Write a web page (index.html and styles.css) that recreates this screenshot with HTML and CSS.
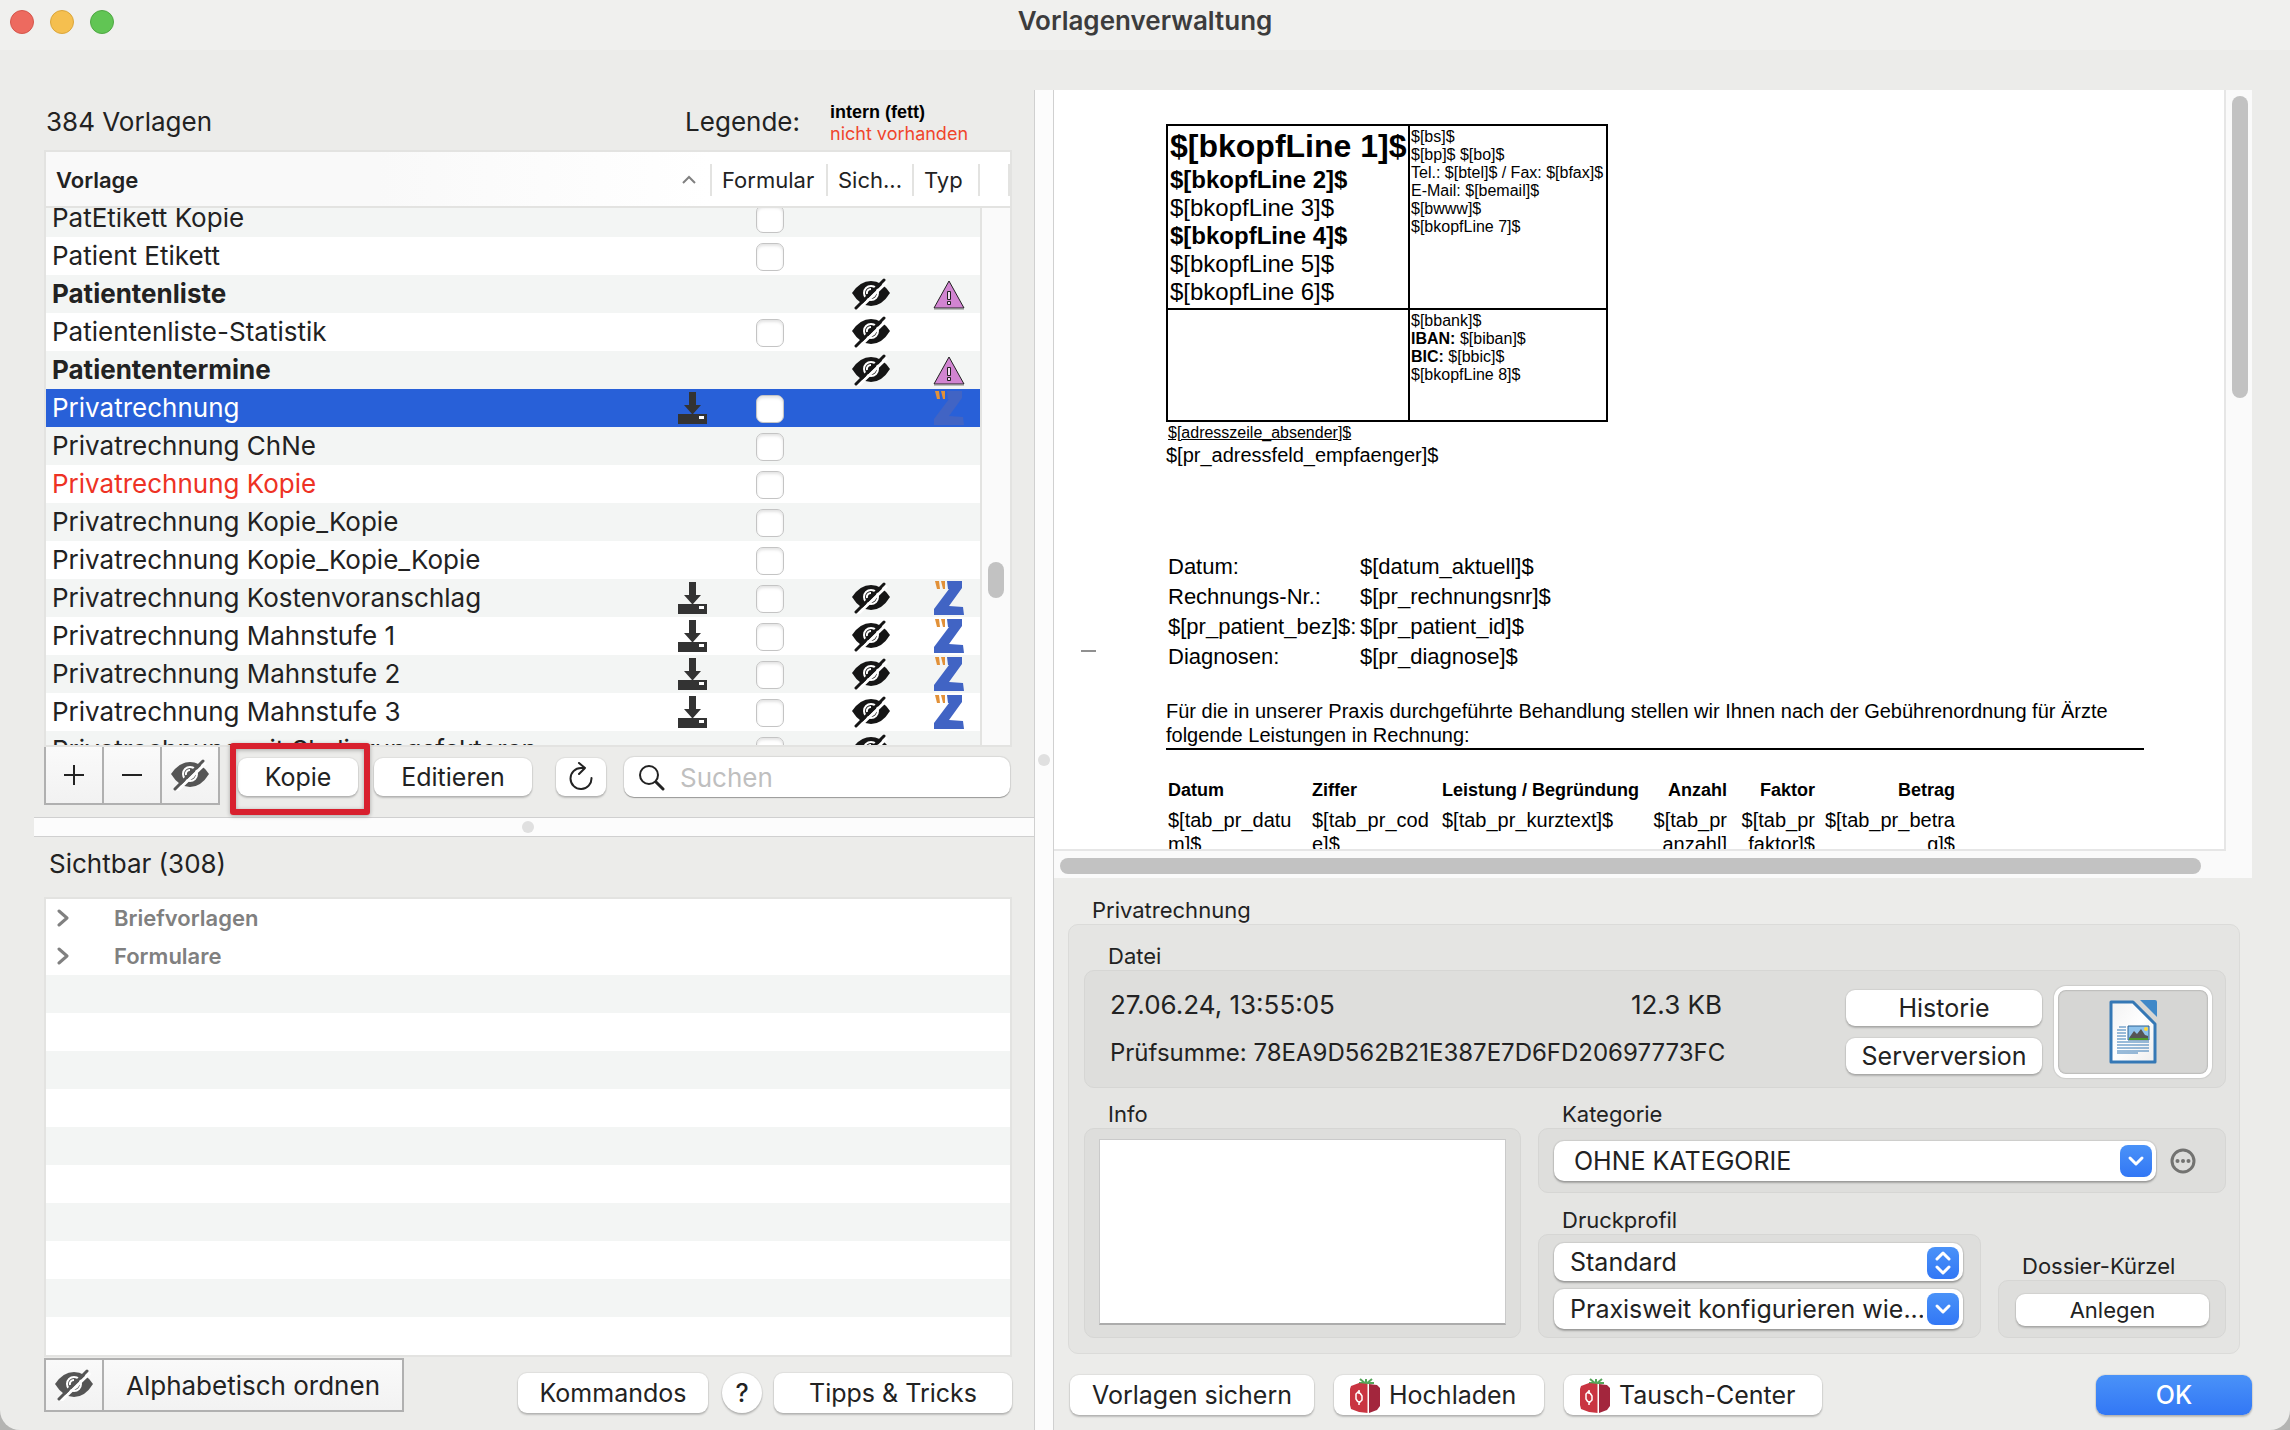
FILE: index.html
```html
<!DOCTYPE html>
<html lang="de">
<head>
    <meta charset="UTF-8">
    <meta name="viewport" content="width=device-width, initial-scale=1.0">
    <title>Vorlagenverwaltung</title>
    <link rel="stylesheet" href="styles.css">
</head>
<body>

<svg class="sprite" aria-hidden="true">
    <symbol id="icon-hidden" viewBox="0 0 38 32">
        <path d="M0 15Q8 3 19 3T38 15Q30 28 19 28T0 15Z" fill="currentColor"/>
        <circle cx="19" cy="15" r="7" fill="none" stroke="#fff" stroke-width="2"/>
        <path d="M15 16a4 4 0 0 1 4-5M23 15a4 4 0 0 1-3 4" fill="none" stroke="#fff" stroke-width="2"/>
        <path d="M6 32L35 4" stroke="#fff" stroke-width="3"/>
        <path d="M4 30L32 2" stroke="currentColor" stroke-width="3" stroke-linecap="round"/>
    </symbol>
    <symbol id="icon-download" viewBox="0 0 29 32">
        <path d="M11 0h7v13h5l-8 9h-1l-8-9h5zM0 22h29v10H0z" fill="#333"/>
        <path d="M21 24h5v3h-5z" fill="#fff"/>
    </symbol>
    <symbol id="icon-warning" viewBox="0 0 32 30">
        <path d="M16 1L31 28H1Z" fill="#d184d1" stroke="#222" stroke-linejoin="round"/>
        <path d="M14.500 11.500h3v8h-3zM14.500 21.500h3v3h-3z" fill="#f3dcf3" stroke="#222"/>
        <path d="M1 29h30" stroke="#888"/>
    </symbol>
    <symbol id="icon-z" viewBox="0 0 30 34">
        <path d="M13 0h15v7L15 25l14 1 1 8H0v-6L15 8h-1z" fill="#4164c4"/>
        <path d="M1 0h4l1 8H3zM7 0h4v8H9z" fill="#e29138"/>
    </symbol>
    <symbol id="icon-tomato" viewBox="0 0 30 36">
        <path d="M16 7V2M16 7l-6-5M16 7l6-5M16 6l-7 0M16 6l8 0" stroke="#55a55a" stroke-width="2"/>
        <path d="M1 9l8-3 9 1v29l-9-1-8-3-1-4V12z" fill="#c93441"/>
        <path d="M19 7l8 1 3 3v18l-3 4-8 3z" fill="#a3263d"/>
        <path d="M18 7v29" stroke="#fff"/>
        <path d="M8 25l-2-3v-5l2-2h2M9 13v4M10 16l2 3v4l-3 3M9 24v4" fill="none" stroke="#fff" stroke-width="1.500"/>
    </symbol>
    <symbol id="icon-down" viewBox="0 0 32 32">
        <path d="M10 13l6 6 6-6" fill="none" stroke="#fff" stroke-width="3" stroke-linecap="round" stroke-linejoin="round"/>
    </symbol>
    <symbol id="icon-updown" viewBox="0 0 32 32">
        <path d="M10 12l6-6 6 6M10 20l6 6 6-6" fill="none" stroke="#fff" stroke-width="3" stroke-linecap="round" stroke-linejoin="round"/>
    </symbol>
    <symbol id="icon-right" viewBox="0 0 12 18">
        <path d="M2 2l8 7-8 7" fill="none" stroke="#808080" stroke-width="3" stroke-linecap="round" stroke-linejoin="round"/>
    </symbol>
</svg>

<div class="window">
    <header class="titlebar">
        <div class="lights">
            <span class="light red"></span>
            <span class="light yellow"></span>
            <span class="light green"></span>
        </div>
        <h1>Vorlagenverwaltung</h1>
    </header>

    <main class="content">
        <div class="left">
            <section class="templates">
                <div class="list-head">
                    <span>384 Vorlagen</span>
                    <span class="legend-title">Legende:</span>
                    <span class="legend"><b>intern (fett)</b><i>nicht vorhanden</i></span>
                </div>
                <div class="list-box">
                    <div class="list-scroll" id="listScroll">
                        <table class="list">
                            <colgroup>
                                <col>
                                <col class="col-form">
                                <col class="col-vis">
                                <col class="col-type">
                                <col class="col-end">
                            </colgroup>
                            <thead>
                                <tr>
                                    <th class="sorted"><div>Vorlage
                                        <svg width="16" height="10" viewBox="0 0 16 10"><path d="M2 8l6-6 6 6" fill="none" stroke="#808080" stroke-width="2"/></svg></div></th>
                                    <th><div>Formular</div></th>
                                    <th><div>Sich...</div></th>
                                    <th><div>Typ</div></th>
                                    <th><div class="last"></div></th>
                                </tr>
                            </thead>
                            <tbody>
                                <tr><td>PatEtikett Kopie</td><td><input type="checkbox" aria-label="Formular"></td><td></td><td></td><td></td></tr>
                                <tr><td>Patient Etikett</td><td><input type="checkbox" aria-label="Formular"></td><td></td><td></td><td></td></tr>
                                <tr class="intern"><td>Patientenliste</td><td></td><td><svg class="eye"><use href="#icon-hidden"/></svg></td><td><svg class="warn"><use href="#icon-warning"/></svg></td><td></td></tr>
                                <tr><td>Patientenliste-Statistik</td><td><input type="checkbox" aria-label="Formular"></td><td><svg class="eye"><use href="#icon-hidden"/></svg></td><td></td><td></td></tr>
                                <tr class="intern"><td>Patiententermine</td><td></td><td><svg class="eye"><use href="#icon-hidden"/></svg></td><td><svg class="warn"><use href="#icon-warning"/></svg></td><td></td></tr>
                                <tr class="selected"><td>Privatrechnung<svg class="dl"><use href="#icon-download"/></svg></td><td><input type="checkbox" aria-label="Formular"></td><td></td><td><svg class="z"><use href="#icon-z"/></svg></td><td></td></tr>
                                <tr><td>Privatrechnung ChNe</td><td><input type="checkbox" aria-label="Formular"></td><td></td><td></td><td></td></tr>
                                <tr class="missing"><td>Privatrechnung Kopie</td><td><input type="checkbox" aria-label="Formular"></td><td></td><td></td><td></td></tr>
                                <tr><td>Privatrechnung Kopie_Kopie</td><td><input type="checkbox" aria-label="Formular"></td><td></td><td></td><td></td></tr>
                                <tr><td>Privatrechnung Kopie_Kopie_Kopie</td><td><input type="checkbox" aria-label="Formular"></td><td></td><td></td><td></td></tr>
                                <tr><td>Privatrechnung Kostenvoranschlag<svg class="dl"><use href="#icon-download"/></svg></td><td><input type="checkbox" aria-label="Formular"></td><td><svg class="eye"><use href="#icon-hidden"/></svg></td><td><svg class="z"><use href="#icon-z"/></svg></td><td></td></tr>
                                <tr><td>Privatrechnung Mahnstufe 1<svg class="dl"><use href="#icon-download"/></svg></td><td><input type="checkbox" aria-label="Formular"></td><td><svg class="eye"><use href="#icon-hidden"/></svg></td><td><svg class="z"><use href="#icon-z"/></svg></td><td></td></tr>
                                <tr><td>Privatrechnung Mahnstufe 2<svg class="dl"><use href="#icon-download"/></svg></td><td><input type="checkbox" aria-label="Formular"></td><td><svg class="eye"><use href="#icon-hidden"/></svg></td><td><svg class="z"><use href="#icon-z"/></svg></td><td></td></tr>
                                <tr><td>Privatrechnung Mahnstufe 3<svg class="dl"><use href="#icon-download"/></svg></td><td><input type="checkbox" aria-label="Formular"></td><td><svg class="eye"><use href="#icon-hidden"/></svg></td><td><svg class="z"><use href="#icon-z"/></svg></td><td></td></tr>
                                <tr><td>Privatrechnung mit Skalierungsfaktoren</td><td><input type="checkbox" aria-label="Formular"></td><td><svg class="eye"><use href="#icon-hidden"/></svg></td><td></td><td></td></tr>
                            </tbody>
                        </table>
                    </div>
                    <div class="list-track"><span></span></div>
                </div>
                <div class="toolbar">
                    <div class="segments">
                        <button type="button" aria-label="Hinzufügen"><svg width="22" height="22" viewBox="0 0 22 22"><path d="M1 11h20M11 1v20" stroke="#222" stroke-width="2"/></svg></button>
                        <button type="button" aria-label="Entfernen"><svg width="22" height="22" viewBox="0 0 22 22"><path d="M1 11h20" stroke="#222" stroke-width="2"/></svg></button>
                        <button type="button" aria-label="Ausblenden"><svg class="eye-big"><use href="#icon-hidden"/></svg></button>
                    </div>
                    <div class="marked"><button type="button" class="btn">Kopie</button></div>
                    <button type="button" class="btn edit">Editieren</button>
                    <button type="button" class="btn reload" aria-label="Neu laden"><svg width="26" height="30" viewBox="0 0 26 30"><path d="M13 6A10.500 10.500 0 1 0 23.500 16M11 1l6 5-6 6M17 6h-4" fill="none" stroke="#222" stroke-width="2" stroke-linecap="round" stroke-linejoin="round"/></svg></button>
                    <div class="search">
                        <svg width="27" height="27" viewBox="0 0 27 27"><circle cx="11" cy="11" r="9" fill="none" stroke="#222" stroke-width="2"/><path d="M18 18l7 7" stroke="#222" stroke-width="3" stroke-linecap="round"/></svg>
                        <input type="text" placeholder="Suchen" aria-label="Suchen">
                    </div>
                </div>
            </section>

            <div class="split-h"><span></span></div>

            <section class="visible">
                <div class="visible-head">Sichtbar (308)</div>
                <div class="tree">
                    <ul>
                        <li><svg><use href="#icon-right"/></svg>Briefvorlagen</li>
                        <li><svg><use href="#icon-right"/></svg>Formulare</li>
                    </ul>
                    <div class="stripes"></div>
                </div>
                <div class="left-footer">
                    <div class="segments order">
                        <button type="button" aria-label="Ausblenden"><svg class="eye"><use href="#icon-hidden"/></svg></button>
                        <button type="button">Alphabetisch ordnen</button>
                    </div>
                    <button type="button" class="btn commands">Kommandos</button>
                    <button type="button" class="btn help">?</button>
                    <button type="button" class="btn tips">Tipps &amp; Tricks</button>
                </div>
            </section>
        </div>

        <div class="split-v"><span></span></div>

        <div class="right">
            <div class="preview">
                <div class="page">
                    <table class="letterhead">
                        <tr>
                            <td>
                                <p class="line1">$[bkopfLine 1]$</p>
                                <p><b>$[bkopfLine 2]$</b></p>
                                <p>$[bkopfLine 3]$</p>
                                <p><b>$[bkopfLine 4]$</b></p>
                                <p>$[bkopfLine 5]$</p>
                                <p>$[bkopfLine 6]$</p>
                            </td>
                            <td class="small">
                                <p>$[bs]$</p>
                                <p>$[bp]$ $[bo]$</p>
                                <p>Tel.: $[btel]$ / Fax: $[bfax]$</p>
                                <p>E-Mail: $[bemail]$</p>
                                <p>$[bwww]$</p>
                                <p>$[bkopfLine 7]$</p>
                            </td>
                        </tr>
                        <tr>
                            <td></td>
                            <td class="small">
                                <p>$[bbank]$</p>
                                <p><b>IBAN:</b> $[biban]$</p>
                                <p><b>BIC:</b> $[bbic]$</p>
                                <p>$[bkopfLine 8]$</p>
                            </td>
                        </tr>
                    </table>
                    <p class="sender">$[adresszeile_absender]$</p>
                    <p class="recipient">$[pr_adressfeld_empfaenger]$</p>
                    <dl class="facts">
                        <dt>Datum:</dt><dd>$[datum_aktuell]$</dd>
                        <dt>Rechnungs-Nr.:</dt><dd>$[pr_rechnungsnr]$</dd>
                        <dt>$[pr_patient_bez]$:</dt><dd>$[pr_patient_id]$</dd>
                        <dt>Diagnosen:</dt><dd>$[pr_diagnose]$</dd>
                    </dl>
                    <p class="intro">Für die in unserer Praxis durchgeführte Behandlung stellen wir Ihnen nach der Gebührenordnung für Ärzte<br>folgende Leistungen in Rechnung:</p>
                    <table class="items">
                        <tr>
                            <th class="c-date">Datum</th>
                            <th class="c-code">Ziffer</th>
                            <th class="c-text">Leistung / Begründung</th>
                            <th class="c-count num">Anzahl</th>
                            <th class="c-factor num">Faktor</th>
                            <th class="c-sum num">Betrag</th>
                        </tr>
                        <tr>
                            <td>$[tab_pr_datu<br>m]$</td>
                            <td>$[tab_pr_cod<br>e]$</td>
                            <td>$[tab_pr_kurztext]$</td>
                            <td class="num">$[tab_pr<br>anzahl]</td>
                            <td class="num">$[tab_pr<br>faktor]$</td>
                            <td class="num">$[tab_pr_betra<br>g]$</td>
                        </tr>
                    </table>
                    <span class="fold"></span>
                </div>
                <div class="track-v"><span></span></div>
                <div class="track-h"><span></span></div>
            </div>

            <section class="details">
                <h2>Privatrechnung</h2>
                <div class="group outer">
                    <h3>Datei</h3>
                    <div class="group file">
                        <div class="file-info">
                            <p class="stamp"><span>27.06.24, 13:55:05</span><span>12.3 KB</span></p>
                            <p class="checksum">Prüfsumme: 78EA9D562B21E387E7D6FD20697773FC</p>
                        </div>
                        <div class="file-buttons">
                            <button type="button" class="btn">Historie</button>
                            <button type="button" class="btn">Serverversion</button>
                        </div>
                        <button type="button" class="doc-button" aria-label="Dokument öffnen">
                            <svg width="48" height="64" viewBox="0 0 48 64">
                                <defs>
                                    <linearGradient id="paper" x1="0" y1="0" x2="1" y2="1"><stop offset="0" stop-color="#f2f2f2"/><stop offset=".5" stop-color="#fff"/><stop offset="1" stop-color="#eee"/></linearGradient>
                                </defs>
                                <path d="M2 2H24L46 24V62H2Z" fill="url(#paper)" stroke="#3578b5" stroke-width="3" stroke-linejoin="round"/>
                                <path d="M31 0H46q2 0 2 2V17Z" fill="#3f88c8"/>
                                <path d="M10 27h7M8 30h9M8 33h9M8 36h9M8 39h9M8 42h32M8 45h32M8 48h32M8 51h32M8 53h21" stroke="#3578b5"/>
                                <path d="M19 26h21v14H19z" fill="#8fc3ec" stroke="#2d6293"/>
                                <path d="M20 38l5-7 3 3 4-5 4 6 3 1v3H20z" fill="#555"/>
                                <path d="M20 38h19v2H20z" fill="#4c9a2a"/>
                                <circle cx="37" cy="29" r="2" fill="#ffd83d"/>
                            </svg>
                        </button>
                    </div>
                    <div class="lower">
                        <div class="info">
                            <h3><label for="info">Info</label></h3>
                            <div class="group"><textarea id="info"></textarea></div>
                        </div>
                        <div class="settings">
                            <h3><label for="category">Kategorie</label></h3>
                            <div class="group category">
                                <div class="popup">
                                    <select id="category"><option>OHNE KATEGORIE</option></select>
                                    <svg><use href="#icon-down"/></svg>
                                </div>
                                <button type="button" class="more" aria-label="Mehr"><svg width="26" height="26" viewBox="0 0 26 26"><circle cx="13" cy="13" r="11" fill="none" stroke="#737371" stroke-width="3"/><g fill="#737371"><circle cx="7.500" cy="13" r="2"/><circle cx="13" cy="13" r="2"/><circle cx="18.500" cy="13" r="2"/></g></svg></button>
                            </div>
                            <div class="profile-row">
                                <div>
                                    <h3><label for="profile">Druckprofil</label></h3>
                                    <div class="group profile">
                                        <div class="popup low">
                                            <select id="profile"><option>Standard</option></select>
                                            <svg><use href="#icon-updown"/></svg>
                                        </div>
                                        <div class="popup">
                                            <select aria-label="Konfiguration"><option>Praxisweit konfigurieren wie...</option></select>
                                            <svg><use href="#icon-down"/></svg>
                                        </div>
                                    </div>
                                </div>
                                <div class="dossier">
                                    <h3>Dossier-Kürzel</h3>
                                    <div class="group"><button type="button" class="btn create">Anlegen</button></div>
                                </div>
                            </div>
                        </div>
                    </div>
                </div>
            </section>

            <div class="actions">
                <button type="button" class="btn save">Vorlagen sichern</button>
                <button type="button" class="btn upload"><svg><use href="#icon-tomato"/></svg>Hochladen</button>
                <button type="button" class="btn exchange"><svg><use href="#icon-tomato"/></svg>Tausch-Center</button>
                <button type="button" class="btn ok">OK</button>
            </div>
        </div>
    </main>
</div>

<script>
    document.getElementById('listScroll').scrollTop = 9;
</script>

</body>
</html>
```

FILE: styles.css
```css
* {
    box-sizing: border-box;
}

html {
    background: #b4b4b2;
}

body {
    margin: 0;
    font-family: Inter, Roboto, sans-serif;
    font-size: 26px;
    color: #222;
}

h1, h2, h3, p, ul, dl, dd {
    margin: 0;
    padding: 0;
    font-weight: normal;
}

button, input, select, textarea {
    font: inherit;
    color: inherit;
}

.sprite {
    position: absolute;
    width: 0;
    height: 0;
}

.window {
    display: flex;
    flex-direction: column;
    height: 100vh;
    background: #ececea;
    border-radius: 0 0 20px 20px;
    overflow: hidden;
}

/* title bar */
.titlebar {
    display: grid;
    grid-template-columns: 1fr auto 1fr;
    height: 50px;
    background: #f0f0ee;
}

.lights {
    display: flex;
    gap: 16px;
    padding: 10px;
}

.light {
    width: 24px;
    height: 24px;
    border-radius: 50%;
    border: 1px solid;
}

.red { background: #ed6a5f; border-color: #d5564b; }
.yellow { background: #f5bf4f; border-color: #dba63b; }
.green { background: #61c554; border-color: #4fa843; }

h1 {
    font-size: 26px;
    line-height: 42px;
    font-weight: 600;
    color: #3c3c3c;
}

.content {
    flex: 1;
    min-height: 0;
    display: grid;
    grid-template-columns: minmax(0, 1034fr) 20px minmax(0, 1236fr);
}

.left, .right, .templates, .visible {
    display: flex;
    flex-direction: column;
    min-height: 0;
}

.templates, .visible {
    padding: 0 22px 0 44px;
}

.templates { flex: 767 1 0; }
.visible { flex: 593 1 0; }

.list-head {
    display: flex;
    align-items: center;
    height: 100px;
    padding: 42px 0 0 2px;
}

.legend-title {
    margin-left: auto;
    margin-right: 30px;
}

.legend {
    display: flex;
    flex-direction: column;
    width: 182px;
    padding-top: 3px;
    font-size: 18px;
    line-height: 22px;
}

.legend b {
    font-family: "Liberation Sans", Arial, sans-serif;
    color: #000;
}

.legend i {
    font-style: normal;
    color: #f0452c;
}

/* template list */
.list-box {
    position: relative;
    flex: 1;
    min-height: 0;
    background: #fff;
    border: 2px solid #e3e3e1;
}

.list-scroll {
    height: 100%;
    overflow-y: scroll;
    scrollbar-width: none;
}

.list {
    width: 100%;
    table-layout: fixed;
    border-spacing: 0;
}

.col-form { width: 116px; }
.col-vis { width: 86px; }
.col-type { width: 66px; }
.col-end { width: 32px; }

.list th {
    position: sticky;
    top: 0;
    z-index: 1;
    height: 56px;
    padding: 2px 0 0;
    background: #fff;
    border-bottom: 2px solid #e3e3e1;
    font-size: 22px;
    font-weight: normal;
    text-align: left;
}

.list th.sorted {
    background: linear-gradient(90deg, #f9f9f9 50%, #fff);
    font-weight: 600;
}

.list th div {
    display: flex;
    align-items: center;
    height: 32px;
    padding-left: 10px;
    border-left: 2px solid #e3e3e1;
}

.list th.sorted div {
    justify-content: space-between;
    padding-right: 13px;
    border: 0;
}

.list th .last {
    border-right: 2px solid #e3e3e1;
}

.list td {
    height: 38px;
    padding: 0 0 2px 4px;
    line-height: 34px;
    text-align: center;
    white-space: nowrap;
}

.list td:first-child {
    padding: 0 3px 0 6px;
    line-height: 36px;
    text-align: left;
}

.list td:nth-child(4) {
    padding-left: 7px;
}

.list td svg, .list td input {
    vertical-align: middle;
}

.list tbody tr:nth-child(odd) { background: #f3f5f4; }
.list .intern { font-weight: 700; }
.list .missing { color: #ee3224; }

.list tbody .selected {
    background: #2860d8;
    color: #fff;
}

.list input {
    appearance: none;
    width: 28px;
    height: 28px;
    margin: 0;
    background: #fff;
    border: 1px solid #c4c4c4;
    border-radius: 7px;
    box-shadow: inset 0 2px 3px #e4e4e4;
}

.eye {
    width: 38px;
    height: 32px;
    color: #151515;
}

.warn {
    width: 32px;
    height: 30px;
}

.z {
    width: 30px;
    height: 34px;
}

.dl {
    float: right;
    width: 29px;
    height: 32px;
    margin-top: 2px;
}

.list-track {
    position: absolute;
    z-index: 2;
    top: 56px;
    right: 0;
    bottom: 0;
    width: 30px;
    padding-left: 6px;
    background: #fafafa;
    border-left: 2px solid #e3e3e1;
}

.list-track span {
    display: block;
    width: 16px;
    height: 36px;
    margin-top: 354px;
    border-radius: 8px;
    background: #c2c2c2;
}

/* buttons */
.btn {
    display: flex;
    flex: none;
    align-items: center;
    justify-content: center;
    height: 38px;
    padding: 0;
    background: #fff;
    border: 0;
    border-radius: 9px;
    box-shadow: 0 0 1px 1px rgba(0, 0, 0, 0.06), 0 2px 2px rgba(0, 0, 0, 0.2);
    font-size: 25px;
    white-space: nowrap;
}

.toolbar {
    display: flex;
    align-items: flex-start;
    height: 70px;
}

.toolbar > .btn, .marked {
    margin-top: 11px;
}

.segments {
    display: flex;
    flex: none;
    height: 58px;
    background: #b0b0b0;
    border: 2px solid #b0b0b0;
    border-top: 0;
    gap: 2px;
}

.segments button {
    display: flex;
    align-items: center;
    justify-content: center;
    width: 56px;
    padding: 0;
    border: 0;
    background: linear-gradient(#fafafa, #f2f2f2);
}

.segments .eye, .eye-big {
    color: #555;
}

.eye-big {
    width: 42px;
    height: 32px;
}

.marked {
    position: relative;
    flex: none;
    width: 120px;
    margin-left: 18px;
    margin-right: 16px;
}

.marked .btn {
    width: 100%;
}

/* red highlight frame around the copy button */
.marked::after {
    content: "";
    position: absolute;
    z-index: 3;
    inset: -15px -12px -19px -8px;
    border: 6px solid #d8202e;
    border-radius: 3px;
    box-shadow: 0 1px 4px rgba(0, 0, 0, 0.3), inset 0 1px 4px rgba(0, 0, 0, 0.3);
    pointer-events: none;
}

.edit { width: 158px; }

.reload {
    width: 50px;
    margin-left: 24px;
}

.search {
    display: flex;
    flex: 1;
    align-items: center;
    gap: 15px;
    min-width: 0;
    height: 40px;
    margin: 10px 2px 0 18px;
    padding-left: 14px;
    background: #fff;
    border-radius: 10px;
    box-shadow: 0 0 1px 1px rgba(0, 0, 0, 0.08), 0 1px 1px rgba(0, 0, 0, 0.3);
}

.search input {
    flex: 1;
    min-width: 0;
    padding: 0;
    border: 0;
    outline: 0;
    background: none;
}

.search input::placeholder {
    color: #bfbfbf;
}

/* splitters */
.split-h {
    display: flex;
    align-items: center;
    justify-content: center;
    height: 20px;
    margin-left: 34px;
    padding-right: 12px;
    background: #fcfcfc;
    border: solid #d0d0d0;
    border-width: 1px 0;
}

.split-v {
    display: flex;
    align-items: center;
    justify-content: center;
    margin-top: 40px;
    background: #fcfcfc;
    border: solid #d0d0d0;
    border-width: 0 1px;
}

.split-h span, .split-v span {
    width: 12px;
    height: 12px;
    border-radius: 50%;
    background: #e0e0e0;
}

/* visible templates */
.visible-head {
    height: 60px;
    padding-left: 5px;
    line-height: 54px;
}

.tree {
    display: flex;
    flex: 1;
    flex-direction: column;
    min-height: 0;
    background: #fff;
    border: 2px solid #e3e3e1;
}

.tree ul {
    list-style: none;
}

.tree li {
    display: flex;
    align-items: center;
    height: 38px;
    padding-left: 11px;
    font-size: 22px;
    font-weight: 600;
    color: #808080;
}

.tree svg {
    width: 12px;
    height: 18px;
    margin-right: 45px;
}

.stripes {
    flex: 1;
    background: repeating-linear-gradient(#f3f5f4 0 38px, #fff 38px 76px);
}

.left-footer {
    display: flex;
    align-items: flex-start;
    height: 73px;
}

.left-footer .btn {
    height: 40px;
    margin-top: 16px;
}

.segments.order {
    height: 54px;
    margin-top: 1px;
    margin-right: auto;
    border-top: 2px solid #b0b0b0;
}

.order button + button {
    width: 298px;
}

.commands { width: 190px; }

.left-footer .help {
    width: 40px;
    margin-left: 14px;
    border-radius: 50%;
    font-weight: 500;
}

.tips {
    width: 238px;
    margin-left: 12px;
}

/* document preview */
.preview {
    flex: 1;
    min-height: 0;
    display: grid;
    grid-template: minmax(0, 1fr) 27px / minmax(0, 1fr) 26px;
    margin: 40px 38px 0 0;
    background: #fafafa;
}

.page {
    position: relative;
    overflow: hidden;
    padding: 34px 80px 0 112px;
    background: #fff;
    border: solid #e6e6e6;
    border-width: 0 2px 2px 0;
    font: 20px/24px "Liberation Sans", Arial, sans-serif;
    color: #000;
}

.letterhead {
    table-layout: fixed;
    width: 442px;
    border-collapse: collapse;
}

.letterhead td {
    height: 112px;
    padding: 1px 2px;
    border: 2px solid #000;
    font-size: 24px;
    line-height: 28px;
    vertical-align: top;
    white-space: nowrap;
}

.letterhead tr:first-child td {
    height: 184px;
}

.letterhead .small {
    width: 198px;
    padding: 2px 1px;
    font-size: 16px;
    line-height: 18px;
}

.letterhead .line1 {
    font-size: 32px;
    line-height: 39px;
    font-weight: bold;
}

.sender {
    padding: 1px 0 0 2px;
    font-size: 16px;
    line-height: 20px;
    text-decoration: underline;
}

.facts {
    display: grid;
    grid-template-columns: 192px 1fr;
    padding: 85px 0 0 2px;
    font-size: 22px;
    line-height: 30px;
}

.intro {
    margin-top: 27px;
    padding-bottom: 1px;
    border-bottom: 2px solid #000;
    white-space: nowrap;
}

.items {
    table-layout: fixed;
    width: 789px;
    margin-top: 28px;
    border-spacing: 0;
}

.items th, .items td {
    padding: 0 0 0 2px;
    text-align: left;
    vertical-align: top;
    white-space: nowrap;
}

.items th {
    height: 30px;
    font-size: 18px;
}

.items .num {
    padding: 0;
    text-align: right;
}

.c-date { width: 144px; }
.c-code { width: 130px; }
.c-text { width: 207px; }
.c-count { width: 80px; }
.c-factor { width: 88px; }

/* fold mark in the page margin */
.fold {
    position: absolute;
    left: 27px;
    top: 560px;
    width: 15px;
    height: 2px;
    background: #909090;
}

.track-v {
    padding: 6px 4px 0 6px;
}

.track-v span {
    display: block;
    height: 40%;
    border-radius: 8px;
    background: #c2c2c2;
}

.track-h {
    padding: 7px 25px 0 6px;
}

.track-h span {
    display: block;
    height: 16px;
    border-radius: 8px;
    background: #c2c2c2;
}

/* details */
.details {
    padding: 18px 50px 0 14px;
}

h2, h3 {
    padding-left: 24px;
    font-size: 22px;
    line-height: 28px;
}

.group {
    background: #dededc;
    border: 1px solid #d6d6d4;
    border-radius: 10px;
}

.outer {
    padding: 17px 13px 15px 15px;
    background: #e5e5e3;
    border-color: #dbdbd9;
}

.file {
    display: flex;
    align-items: flex-start;
    height: 118px;
    padding: 15px 13px 0 25px;
}

.file-info {
    flex: 1;
    min-width: 0;
}

.stamp {
    display: flex;
    justify-content: space-between;
    padding: 2px 124px 0 0;
    line-height: 34px;
}

.checksum {
    padding-top: 16px;
    font-size: 24px;
    line-height: 30px;
    white-space: nowrap;
}

.file-buttons {
    display: flex;
    flex-direction: column;
    gap: 12px;
    width: 196px;
    padding-top: 4px;
}

.file-buttons .btn {
    height: 36px;
}

.doc-button {
    width: 158px;
    height: 92px;
    margin-left: 12px;
    padding: 0;
    background: #d6d6d4;
    border: 4px solid #fff;
    border-radius: 12px;
    box-shadow: 0 0 1px 1px rgba(0, 0, 0, 0.08), inset 0 0 2px rgba(0, 0, 0, 0.4);
}

.doc-button svg {
    display: block;
    margin: 0 auto;
}

.lower {
    display: grid;
    grid-template-columns: minmax(0, 437fr) minmax(0, 688fr);
    gap: 17px;
    padding-top: 12px;
}

.info {
    display: flex;
    flex-direction: column;
}

.info .group {
    display: flex;
    flex: 1;
    padding: 10px 14px 12px;
}

textarea {
    flex: 1;
    min-width: 0;
    background: #fff;
    border: 1px solid #cacaca;
    border-bottom: 2px solid #acacac;
    resize: none;
}

.category {
    display: flex;
    align-items: center;
    gap: 14px;
    height: 65px;
    padding: 0 29px 0 15px;
}

.category .popup {
    flex: 1;
}

.popup {
    position: relative;
    height: 40px;
}

.popup.low {
    height: 38px;
}

.popup select {
    appearance: none;
    width: 100%;
    height: 100%;
    padding: 0 40px 0 16px;
    background: #fff;
    border: 0;
    border-radius: 10px;
    box-shadow: 0 0 1px 1px rgba(0, 0, 0, 0.08), 0 2px 2px rgba(0, 0, 0, 0.25);
    font-size: 25px;
}

.category select {
    padding-left: 20px;
}

.popup svg {
    position: absolute;
    top: 4px;
    right: 4px;
    width: 32px;
    height: 32px;
    border-radius: 8px;
    background: linear-gradient(#4a92f8, #3277f5);
    pointer-events: none;
}

.more {
    height: 26px;
    padding: 0;
    border: 0;
    background: none;
}

.more svg {
    display: block;
}

.profile-row {
    display: grid;
    grid-template-columns: minmax(0, 443fr) minmax(0, 228fr);
    gap: 17px;
    align-items: end;
    padding-top: 13px;
}

.profile {
    display: flex;
    flex-direction: column;
    gap: 8px;
    height: 104px;
    padding: 8px 17px 0 15px;
}

.dossier .group {
    height: 58px;
    padding: 13px 16px 0 17px;
}

.create {
    width: 100%;
    height: 32px;
    font-size: 22px;
}

.actions {
    display: flex;
    align-items: flex-start;
    gap: 20px;
    height: 76px;
    padding: 21px 38px 0 16px;
}

.actions .btn {
    height: 40px;
}

.actions svg {
    width: 30px;
    height: 36px;
    margin-right: 9px;
}

.save { width: 244px; }

.upload, .exchange {
    justify-content: flex-start;
    padding-left: 16px;
}

.upload { width: 210px; }
.exchange { width: 258px; }

.actions .ok {
    width: 156px;
    margin-left: auto;
    background: linear-gradient(#4a92f8, #3277f5);
    color: #fff;
    font-weight: 500;
}
```
